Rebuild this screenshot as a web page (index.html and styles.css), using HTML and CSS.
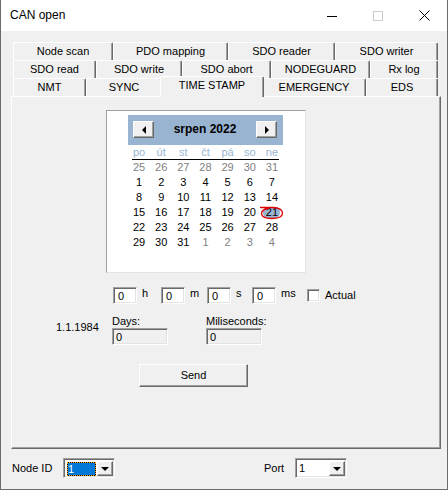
FILE: index.html
```html
<!DOCTYPE html>
<html lang="cs">
<head>
<meta charset="utf-8">
<title>CAN open</title>
<link rel="stylesheet" href="styles.css">
</head>
<body>
<div class="window">
  <div class="titlebar">
    <span class="title">CAN open</span>
    <div class="caption-buttons">
      <span class="cap-btn"><svg width="10" height="10" viewBox="0 0 10 10"><path d="M0 5.5H10" stroke="#000" stroke-width="1"/></svg></span>
      <span class="cap-btn"><svg width="10" height="10" viewBox="0 0 10 10"><rect x="0.5" y="0.5" width="9" height="9" fill="none" stroke="#cccccc"/></svg></span>
      <span class="cap-btn"><svg width="11" height="11" viewBox="0 0 11 11"><path d="M0.5 0.5L10.5 10.5M10.5 0.5L0.5 10.5" stroke="#000" stroke-width="1"/></svg></span>
    </div>
  </div>
  <div class="client">
    <div class="tabs">
      <div class="tab-row row1">
        <div class="tab">Node scan</div>
        <div class="tab">PDO mapping</div>
        <div class="tab">SDO reader</div>
        <div class="tab">SDO writer</div>
      </div>
      <div class="tab-row row2">
        <div class="tab">SDO read</div>
        <div class="tab">SDO write</div>
        <div class="tab">SDO abort</div>
        <div class="tab">NODEGUARD</div>
        <div class="tab">Rx log</div>
      </div>
      <div class="tab-row row3">
        <div class="tab">NMT</div>
        <div class="tab">SYNC</div>
        <div class="tab active">TIME STAMP</div>
        <div class="tab">EMERGENCY</div>
        <div class="tab">EDS</div>
      </div>
    </div>
    <div class="panel">
      <div class="calendar">
        <div class="cal-inner">
          <div class="cal-header">
            <span class="cal-btn"><span class="arrow-left"></span></span>
            <span class="cal-month">srpen 2022</span>
            <span class="cal-btn"><span class="arrow-right"></span></span>
          </div>
          <div class="cal-dow">
            <span>po</span><span>út</span><span>st</span><span>čt</span><span>pá</span><span>so</span><span>ne</span>
          </div>
          <div class="cal-rule"></div>
          <div class="cal-days">
            <span class="other">25</span><span class="other">26</span><span class="other">27</span><span class="other">28</span><span class="other">29</span><span class="other">30</span><span class="other">31</span>
            <span>1</span><span>2</span><span>3</span><span>4</span><span>5</span><span>6</span><span>7</span>
            <span>8</span><span>9</span><span>10</span><span>11</span><span>12</span><span>13</span><span>14</span>
            <span>15</span><span>16</span><span>17</span><span>18</span><span>19</span><span>20</span>
            <span class="today"><span class="today-fill">21</span><svg class="today-ring" width="24" height="14" viewBox="0 0 24 14"><path d="M0 1.5H13C19 1.5 22.5 4 22.5 7C22.5 10.5 18 12.5 11.5 12.5C5 12.5 1.5 10.5 1.5 7.5C1.5 4.5 5 2.5 9 2.5" fill="none" stroke="#e00000" stroke-width="1.3"/></svg></span>
            <span>22</span><span>23</span><span>24</span><span>25</span><span>26</span><span>27</span><span>28</span>
            <span>29</span><span>30</span><span>31</span><span class="other">1</span><span class="other">2</span><span class="other">3</span><span class="other">4</span>
          </div>
        </div>
      </div>

      <div class="time-row">
        <div class="input">0</div><span class="unit">h</span>
        <div class="input">0</div><span class="unit">m</span>
        <div class="input">0</div><span class="unit">s</span>
        <div class="input">0</div><span class="unit">ms</span>
        <span class="checkbox"></span><span class="check-label">Actual</span>
      </div>

      <div class="info-row">
        <span class="date">1.1.1984</span>
        <div class="field-group">
          <div class="field-label">Days:</div>
          <div class="field">0</div>
        </div>
        <div class="field-group">
          <div class="field-label">Miliseconds:</div>
          <div class="field">0</div>
        </div>
      </div>

      <div class="button send">Send</div>
    </div>

    <div class="footer">
      <span class="footer-label node-label">Node ID</span>
      <div class="combo">
        <span class="combo-value focused">1</span>
        <span class="combo-btn"><span class="arrow-down"></span></span>
      </div>
      <span class="footer-label port-label">Port</span>
      <div class="combo">
        <span class="combo-value">1</span>
        <span class="combo-btn"><span class="arrow-down"></span></span>
      </div>
    </div>
  </div>
</div>
</body>
</html>
```

FILE: styles.css
```css
* {
  box-sizing: border-box;
}

html, body {
  margin: 0;
  padding: 0;
}

body {
  font-family: "Liberation Sans", Arial, sans-serif;
  font-size: 11px;
  line-height: 13px;
  color: #000;
  background: #f0f0f0;
}

.window {
  width: 448px;
  height: 490px;
  background: #f0f0f0;
  border: 1px solid #6b6b6b;
  border-top: none;
  display: flex;
  flex-direction: column;
}

/* title bar */
.titlebar {
  height: 31px;
  flex: none;
  background: #fff;
  display: flex;
  align-items: center;
}

.title {
  flex: 1;
  font-size: 12px;
  padding-left: 9px;
}

.caption-buttons {
  display: flex;
  align-self: stretch;
}

.cap-btn {
  width: 46px;
  display: flex;
  align-items: center;
  justify-content: center;
}

/* client area */
.client {
  flex: 1;
  padding: 11px 0 0 10px;
}

.tabs {
  margin-left: 2px;
  width: 425px;
}

.tab-row {
  display: grid;
  height: 18px;
}

.row1 { grid-template-columns: 100px 115px 107px 103px; }
.row2 { grid-template-columns: 83px 86px 89px 99px 68px; }
.row3 { grid-template-columns: 73px 76px 100px 104px 72px; }

.tab {
  display: flex;
  align-items: center;
  justify-content: center;
  white-space: nowrap;
  background: #f0f0f0;
  border-top: 1px solid #fff;
  border-left: 1px solid #fff;
  border-right: 1px solid #696969;
  box-shadow: inset -1px 0 #a0a0a0;
  border-radius: 2px 2px 0 0;
  padding-bottom: 1px;
}

.tab.active {
  position: relative;
  z-index: 1;
  margin: -2px -2px -1px;
  padding-bottom: 3px;
}

.panel {
  width: 430px;
  height: 353px;
  border-top: 1px solid #fff;
  border-left: 1px solid #fff;
  border-right: 1px solid #696969;
  border-bottom: 1px solid #696969;
  box-shadow: inset -1px -1px #a0a0a0;
  padding-top: 13px;
}

/* calendar */
.calendar {
  margin-left: 94px;
  width: 200px;
  height: 163px;
  background: #fff;
  border: 1px solid;
  border-color: #a0a0a0 #e3e3e3 #e3e3e3 #a0a0a0;
  padding: 4px 0 0 21px;
}

.cal-inner {
  width: 155px;
}

.cal-header {
  height: 30px;
  background: #99b4d1;
  display: flex;
  align-items: flex-start;
  justify-content: space-between;
  padding: 6px 6px 0 5px;
}

.cal-btn {
  width: 21px;
  height: 17px;
  background: #f0f0f0;
  border: 1px solid;
  border-color: #fff #696969 #696969 #fff;
  box-shadow: inset -1px -1px #a0a0a0;
  display: flex;
  align-items: center;
  justify-content: center;
}

.arrow-left {
  width: 0;
  height: 0;
  border-top: 4px solid transparent;
  border-bottom: 4px solid transparent;
  border-right: 4px solid #000;
}

.arrow-right {
  width: 0;
  height: 0;
  border-top: 4px solid transparent;
  border-bottom: 4px solid transparent;
  border-left: 4px solid #000;
}

.cal-month {
  font-weight: bold;
  font-size: 12px;
  line-height: 17px;
}

.cal-dow {
  display: grid;
  grid-template-columns: repeat(7, 1fr);
  height: 14px;
  line-height: 15px;
  text-align: center;
  color: #99b4d1;
}

.cal-rule {
  height: 1px;
  margin: 0 4px;
  background: #000;
}

.cal-days {
  display: grid;
  grid-template-columns: repeat(7, 1fr);
  grid-auto-rows: 15px;
  line-height: 15px;
  text-align: center;
}

.cal-days .other {
  color: #808080;
}

.today {
  position: relative;
  display: flex;
  justify-content: center;
  align-items: center;
}

.today-fill {
  background: #99b4d1;
  width: 17px;
  line-height: 11px;
  border-radius: 5px;
}

.today-ring {
  position: absolute;
  left: -1px;
  top: 1px;
}

/* time inputs */
.time-row {
  display: grid;
  grid-template-columns: 24px 24px 24px 22px 24px 21px 24px 31px 13px auto;
  align-items: center;
  height: 17px;
  margin: 14px 0 0 101px;
}

.input, .field {
  height: 17px;
  border: 1px solid;
  border-color: #a0a0a0 #fff #fff #a0a0a0;
  box-shadow: inset 1px 1px #696969, inset -1px -1px #e3e3e3;
  padding: 2px 0 0 4px;
  line-height: 13px;
}

.input {
  background: #fff;
}

.unit {
  align-self: start;
  padding-left: 5px;
  line-height: 13px;
}

.checkbox {
  width: 13px;
  height: 13px;
  background: #fff;
  border: 1px solid;
  border-color: #a0a0a0 #fff #fff #a0a0a0;
  box-shadow: inset 1px 1px #696969, inset -1px -1px #e3e3e3;
}

.check-label {
  padding-left: 5px;
}

/* info fields */
.info-row {
  display: flex;
  margin-top: 10px;
}

.date {
  width: 56px;
  margin: 7px 0 0 44px;
}

.field-group {
  width: 56px;
}

.field-group + .field-group {
  margin-left: 38px;
}

.field-label {
  height: 14px;
  line-height: 14px;
}

.field {
  background: #f0f0f0;
  padding-left: 3px;
}

/* buttons */
.button {
  background: #f0f0f0;
  border: 1px solid;
  border-color: #fff #696969 #696969 #fff;
  box-shadow: inset -1px -1px #a0a0a0;
  text-align: center;
}

.send {
  width: 109px;
  height: 23px;
  line-height: 21px;
  margin: 19px 0 0 127px;
}

/* footer */
.footer {
  display: flex;
  align-items: center;
  height: 20px;
  margin-top: 9px;
}

.footer-label {
  padding-left: 1px;
}

.node-label {
  width: 52px;
}

.port-label {
  width: 32px;
  margin-left: 148px;
}

.combo {
  width: 52px;
  height: 20px;
  display: flex;
  background: #fff;
  border: 1px solid;
  border-color: #a0a0a0 #fff #fff #a0a0a0;
  box-shadow: inset 1px 1px #696969, inset -1px -1px #e3e3e3;
  padding: 2px 1px 1px 2px;
}

.combo-value {
  flex: 1;
  padding-left: 1px;
  line-height: 14px;
}

.combo-value.focused {
  margin: 1px 1px 0 1px;
  background: #0078d7;
  color: #fff;
  border: 1px solid #000;
  outline: 1px dotted #ffa500;
  outline-offset: -1px;
  line-height: 13px;
  padding-left: 0;
}

.combo-btn {
  width: 16px;
  background: #f0f0f0;
  border: 1px solid;
  border-color: #fff #696969 #696969 #fff;
  box-shadow: inset -1px -1px #a0a0a0;
  display: flex;
  align-items: center;
  justify-content: center;
}

.arrow-down {
  width: 0;
  height: 0;
  border-left: 4px solid transparent;
  border-right: 4px solid transparent;
  border-top: 4px solid #000;
}
```
